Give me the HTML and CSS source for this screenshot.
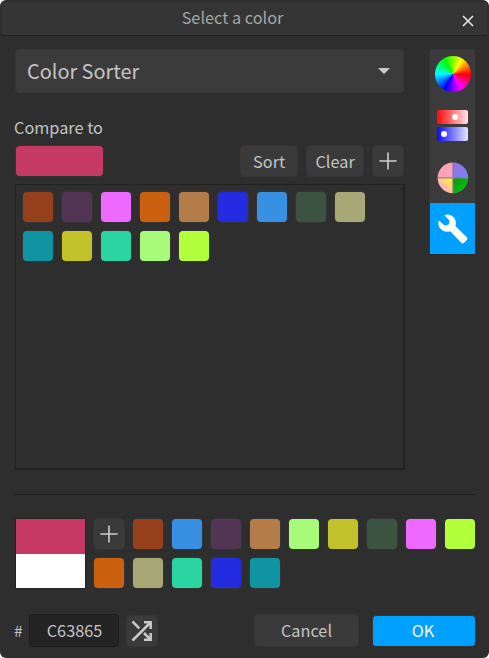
FILE: index.html
```html
<!DOCTYPE html>
<html lang="en">
<head>
<meta charset="utf-8">
<title>Select a color</title>
<link rel="stylesheet" href="styles.css">
</head>
<body>
<main class="dialog">
  <header class="titlebar">
    <span class="title">Select a color</span>
    <button class="close" aria-label="Close"><svg width="12" height="12" viewBox="0 0 12 12"><path d="M1 1l10 10M11 1L1 11"/></svg></button>
  </header>
  <div class="content">
    <section class="sorter">
      <div class="combo"><span>Color Sorter</span><svg width="12" height="6" viewBox="0 0 12 6"><path d="M0 0h12L6 6z" fill="#cacaca"/></svg></div>
      <label class="compare">Compare to</label>
      <div class="tools">
        <div class="current crimson"></div>
        <button class="btn">Sort</button>
        <button class="btn">Clear</button>
        <button class="btn square" aria-label="Add"><svg width="18" height="18" viewBox="0 0 18 18"><path class="plus" d="M9 .4v17.200M.4 9h17.200"/></svg></button>
      </div>
      <div class="list">
        <i class="swatch rust"></i><i class="swatch plum"></i><i class="swatch pink"></i><i class="swatch orange"></i><i class="swatch tan"></i><i class="swatch blue"></i><i class="swatch sky"></i><i class="swatch forest"></i><i class="swatch sand"></i>
        <i class="swatch teal"></i><i class="swatch mustard"></i><i class="swatch mint"></i><i class="swatch lightgreen"></i><i class="swatch lime"></i>
      </div>
    </section>
    <nav class="modes">
      <div class="mode first"><div class="wheel"></div></div>
      <div class="mode sliders"><div class="slider red"><b></b></div><div class="slider indigo"><b></b></div></div>
      <div class="mode"><svg width="32" height="32" viewBox="0 0 32 32">
        <defs>
          <linearGradient id="q1" x2="1" y2="1"><stop offset=".2" stop-color="#ffa0a4"/><stop offset="1" stop-color="#f3a6c8"/></linearGradient>
          <linearGradient id="q2" x2="1" y2="1"><stop offset="0" stop-color="#9474e0"/><stop offset="1" stop-color="#7880f0"/></linearGradient>
          <linearGradient id="q3" x1="1" y1="0" x2="0" y2="1"><stop offset=".1" stop-color="#ffe64a"/><stop offset=".3" stop-color="#ffe15a"/><stop offset=".55" stop-color="#ffb8b0"/></linearGradient>
          <linearGradient id="q4" x2="1" y2="1"><stop offset="0" stop-color="#009a08"/><stop offset="1" stop-color="#12c81c"/></linearGradient>
        </defs>
        <path fill="url(#q1)" d="M15.600 15.600V.6a15.400 15.400 0 0 0-15 15z"/>
        <path fill="url(#q2)" d="M16.200 15.600V.6a15.400 15.400 0 0 1 15 15z"/>
        <path fill="url(#q3)" d="M15.600 16.200v15a15.400 15.400 0 0 1-15-15z"/>
        <path fill="url(#q4)" d="M16.200 16.200v15a15.400 15.400 0 0 0 15-15z"/>
        <path d="M15.900.6v30.600" stroke="#c98bcf" stroke-width=".7"/><path d="M.6 15.900h30.600" stroke="#dba0c0" stroke-width=".7"/>
      </svg></div>
      <div class="mode active"><svg width="30" height="30" viewBox="0 0 30 30"><path fill="#fff" d="M6.300 1.200C9.500-.2 13.500.7 15.800 3.400c2 2.300 2.600 5.500 1.600 8.500L28.600 23.100c1 1 1 2 .2 2.800l-2.700 2.800c-.9.900-2 .9-2.900 0L12.300 17.300c-3.200 1.100-6.700.5-9.300-2C.5 12.900-.4 9.600 1 6.500l5.500 5.100 4.100-1 .9-4.200z"/></svg></div>
    </nav>
  </div>
  <hr class="rule">
  <section class="palette">
    <div class="preview"><div class="crimson"></div><div class="white"></div></div>
    <div class="saved">
      <button class="swatch add" aria-label="Add"><svg width="18" height="18" viewBox="0 0 18 18"><path class="plus" d="M9 .4v17.200M.4 9h17.200"/></svg></button><i class="swatch rust"></i><i class="swatch sky"></i><i class="swatch plum"></i><i class="swatch tan"></i><i class="swatch lightgreen"></i><i class="swatch mustard"></i><i class="swatch forest"></i><i class="swatch pink"></i><i class="swatch lime"></i>
      <i class="swatch orange"></i><i class="swatch sand"></i><i class="swatch mint"></i><i class="swatch blue"></i><i class="swatch teal"></i>
    </div>
  </section>
  <footer class="footer">
    <span class="hash">#</span>
    <div class="hex">C63865</div>
    <button class="btn square shuffle" aria-label="Random color"><svg width="22" height="22" viewBox="0 0 22 22"><path d="M1.500 1.500l6.800 6.800M1.500 20.500L19 3M13 13l6 6" fill="none" stroke="#c8c8c8" stroke-width="2.500"/><path d="M13 2.300h6.700V9M19.700 13v6.700H13" fill="none" stroke="#c8c8c8" stroke-width="2.500"/></svg></button>
    <button class="btn cancel">Cancel</button>
    <button class="btn ok">OK</button>
  </footer>
</main>
</body>
</html>
```
FILE: styles.css
```css
* { box-sizing: border-box; }
body { margin: 0; background: #fff; }
svg { display: block; flex: none; }
button { border: 0; padding: 0; font: inherit; color: inherit; background: none; }

.dialog {
  width: 489px;
  height: 658px;
  background: #2e2e2e;
  border-radius: 6px;
  overflow: hidden;
  color: #c4c4c4;
  font: 16.3px/24px "Noto Sans CJK SC", "Noto Sans", sans-serif;
}
.titlebar {
  display: grid;
  grid-template-columns: 20px 1fr 44px;
  height: 34px;
  margin: 2px 2px 0;
  background: #353535;
  border-bottom: 1px solid #212121;
}
.title {
  grid-column: 2;
  padding-top: 3px;
  text-align: center;
  color: #a6a6a6;
}
.close { display: flex; padding: 13px 0 0 19px; }
.close path { stroke: #e0e0e0; stroke-width: 1.7; }

.content { display: flex; gap: 24px; margin: 13px 14px 0 15px; }
.sorter { width: 391px; }
.combo {
  display: flex;
  align-items: center;
  justify-content: space-between;
  width: 389px;
  height: 44px;
  padding: 0 13px 0 11px;
  border-radius: 4px;
  background: #3b3b3b;
  border: 1px solid #363636;
  font-size: 19.9px;
}
.compare { display: block; height: 24px; margin: 22px 0 6px -1px; }
.tools { display: flex; height: 32px; gap: 8px; align-items: center; }
.current { width: 87px; height: 30px; margin: 0 auto 0 1px; border-radius: 4px; box-shadow: 0 0 0 1px #343434; }
.btn {
  display: flex;
  align-items: center;
  justify-content: center;
  width: 58px;
  height: 32px;
  padding-bottom: 1px;
  border-radius: 4px;
  background: #3a3a3a;
  border: 1px solid #353535;
}
.square { width: 32px; padding-bottom: 0; }
.tools .square { margin-right: 1px; }
.plus { stroke: #cecece; stroke-width: 1.6; }
.list {
  display: grid;
  grid-template-columns: repeat(9, 30px);
  grid-auto-rows: 30px;
  gap: 9px;
  height: 286px;
  margin-top: 7px;
  padding: 7px;
  border: solid #222;
  border-width: 1px 2px 2px 1px;
}
.swatch { width: 30px; height: 30px; border-radius: 4px; box-shadow: 0 0 0 1px #343434; }

.modes { width: 46px; height: 205px; background: #3b3b3b; border-left: 1px solid #343434; border-radius: 4px 4px 0 0; }
.mode { display: flex; height: 51px; align-items: center; justify-content: center; }
.first { height: 52px; padding: 0 0 2px; }
.active { background: #00a0ff; }
.wheel {
  width: 36px;
  height: 36px;
  border-radius: 50%;
  background: conic-gradient(from 90deg, #f00, #f0f, #00f, #0ff, #0f0, #ff0, #f00);
}
.sliders { flex-direction: column; gap: 3px; padding-bottom: 2px; }
.slider { display: flex; align-items: center; width: 31px; height: 14px; border-radius: 2px; }
.slider b { width: 6px; height: 6px; border-radius: 50%; background: #fff; }
.red { background: linear-gradient(90deg, #ff0808, #ffe6e6); padding-left: 15px; }
.indigo { background: linear-gradient(90deg, #0808ff, #e6e6ff); padding-left: 4px; }

.rule { height: 1px; margin: 24px 13px 0 14px; border: 0; background: #212121; }
.palette { display: flex; gap: 9px; height: 71px; margin: 23px 13px 0 15px; }
.preview { display: grid; grid-template-rows: 35px 34px; width: 71px; height: 71px; border: 1px solid #242424; }
.saved { display: grid; grid-template-columns: repeat(10, 30px); grid-auto-rows: 30px; gap: 9px; padding-top: 1px; margin-left: -1px; }
.add { display: flex; align-items: center; justify-content: center; background: #3a3a3a; }

.footer { display: flex; align-items: center; height: 33px; margin: 25px 13px 0 14px; }
.hash { width: 15px; font-size: 15.5px; margin-bottom: 2px; }
.hex {
  width: 90px;
  height: 33px;
  padding: 3px 0 3px 1px;
  text-align: center;
  background: #242424;
  border: 1px solid #1b1b1b;
  border-radius: 4px;
}
.shuffle { margin-left: 7px; }
.cancel { width: 105px; height: 33px; margin-left: auto; }
.ok { width: 104px; margin-left: 13px; padding-right: 2px; background: #00a0ff; color: #fff; }

.crimson { background: #c63865; }
.white { background: #fff; }
.rust { background: #96401b; }
.plum { background: #523455; }
.pink { background: #ee69ff; }
.orange { background: #cb610f; }
.tan { background: #b47c48; }
.blue { background: #232ce0; }
.sky { background: #3890e3; }
.forest { background: #3c5341; }
.sand { background: #a8a776; }
.teal { background: #1194a1; }
.mustard { background: #c1c229; }
.mint { background: #2bd5a1; }
.lightgreen { background: #a8fa7a; }
.lime { background: #b3ff3c; }
```
